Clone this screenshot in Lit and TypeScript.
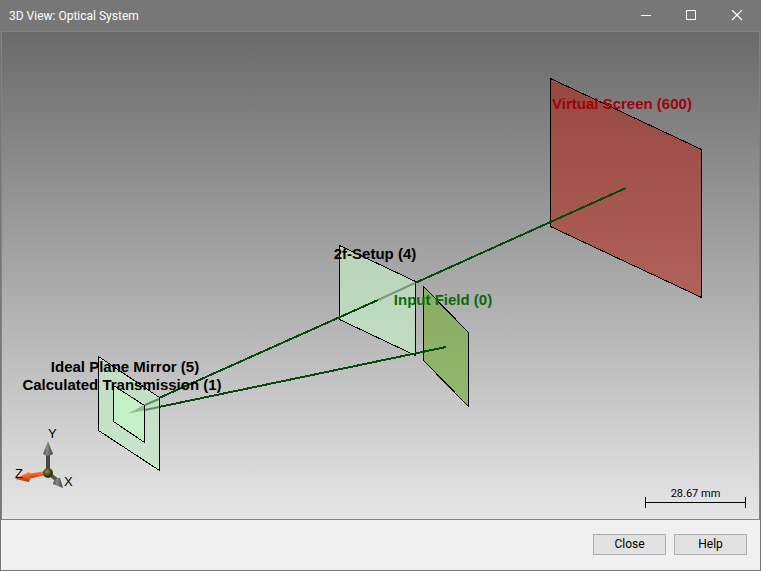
import { LitElement, html, css, svg } from "lit";
import { customElement, property } from "lit/decorators.js";

interface Label {
  text: string;
  x: number;
  y: number;
  kind: string;
}

const LABELS: Label[] = [
  { text: "Virtual Screen (600)", x: 622, y: 109, kind: "screen" },
  { text: "2f-Setup (4)", x: 375, y: 259, kind: "plain" },
  { text: "Input Field (0)", x: 443, y: 305, kind: "input" },
  { text: "Ideal Plane Mirror (5)", x: 125, y: 372, kind: "plain" },
  { text: "Calculated Transmission (1)", x: 122, y: 390, kind: "plain" },
];

/* Perspective drawing of the optical elements and the light path. */
@customElement("optical-scene")
export class OpticalScene extends LitElement {
  static styles = css`
    :host { display: block; min-width: 0; min-height: 0; }
    .scene { display: block; width: 100%; height: 100%; }
    .edge { stroke: #000; stroke-width: 1; shape-rendering: crispEdges; }
    .ray { stroke: #044a0c; stroke-width: 2; fill: none; shape-rendering: crispEdges; }
    .red { fill: #b22416; fill-opacity: 0.55; }
    .mint { fill: #c2eac6; fill-opacity: 0.7; }
    .core { fill: #c3f6c8; fill-opacity: 0.8; }
    .olive { fill: #78ac3c; fill-opacity: 0.66; }
    .label { font: bold 15px "Liberation Sans", Arial, sans-serif; text-anchor: middle; }
    .plain { fill: #000; }
    .screen { fill: #a00008; }
    .input { fill: #0a6a0a; }
  `;

  render() {
    return html`
      <svg class="scene" viewBox="2 32 757 487" role="img" aria-label="Optical system">
        <polygon class="edge red" points="550.5,78.5 701.5,149.5 701.5,297.5 550.5,226.5" />
        <polygon class="edge mint" points="339.5,245.5 415.5,281.5 415.5,355.5 339.5,319.5" />
        <polygon class="edge olive" points="423.5,286.5 468.5,332.5 468.5,406.5 423.5,360.5" />
        <path class="ray" d="M626 188L415 283M378 300L159 398M446 347L159 407" />
        <path d="M415 283L378 300" stroke="#759b78" stroke-width="2" />
        <polygon class="edge mint" points="98.5,356.5 159.5,397.5 159.5,470.5 98.5,430.5" />
        <polygon class="edge core" points="113.5,385.5 144.5,405.5 144.5,442.5 113.5,421.5" />
        <path d="M128 413.500L144 405L144 410.500Z" fill="#8fb894" />
        <path d="M145 405L159 399M145 410L159 407" stroke="#5e8c64" stroke-width="2" />
        ${LABELS.map((l) => svg`<text class="label ${l.kind}" x=${l.x} y=${l.y}>${l.text}</text>`)}
      </svg>
    `;
  }
}

/* Orientation triad shown in the corner of the view. */
@customElement("axis-triad")
export class AxisTriad extends LitElement {
  static styles = css`
    :host { display: block; }
    .triad { display: block; width: 68px; height: 72px; }
    .name { font: 13px "Liberation Sans", Arial, sans-serif; fill: #000; }
  `;

  render() {
    return html`
      <svg class="triad" viewBox="12 420 68 72" role="img" aria-label="Axes">
        <defs>
          <linearGradient id="steel">
            <stop offset="0" stop-color="#484848" />
            <stop offset="0.4" stop-color="#8a8a86" />
            <stop offset="1" stop-color="#3c3c3c" />
          </linearGradient>
          <linearGradient id="flame" x1="0" y1="0" x2="0" y2="1">
            <stop offset="0" stop-color="#ff7a38" />
            <stop offset="0.5" stop-color="#f05a1c" />
            <stop offset="1" stop-color="#a83208" />
          </linearGradient>
          <radialGradient id="ball" cx="0.4" cy="0.35">
            <stop offset="0" stop-color="#8c8c48" />
            <stop offset="1" stop-color="#34340c" />
          </radialGradient>
        </defs>
        <rect x="46" y="453" width="4" height="19" fill="#4a4a4a" />
        <path d="M48 441L53 454Q48 457 43 454Z" fill="url(#steel)" />
        <path d="M27 474L46 471L46 475L28 479Z" fill="url(#flame)" />
        <path d="M15 479L29 472Q32 476 29 482Z" fill="url(#flame)" />
        <path d="M48 473L57 480" stroke="#555" stroke-width="4" />
        <path d="M63 488L53 484Q54 477 60 478Z" fill="url(#steel)" />
        <circle cx="48" cy="473" r="5" fill="url(#ball)" />
        <text class="name" x="48" y="438">Y</text>
        <text class="name" x="15" y="478">Z</text>
        <text class="name" x="64" y="486">X</text>
      </svg>
    `;
  }
}

@customElement("app-root")
export class AppRoot extends LitElement {
  @property() caption = "3D View: Optical System";
  @property() scale = "28.67 mm";

  static styles = css`
    * { box-sizing: border-box; }
    :host { display: block; font: 12px Roboto, "Open Sans", sans-serif; color: #000; }
    .window {
      display: flex;
      flex-direction: column;
      height: 100vh;
      border: 1px solid #777;
      background: #f0f0f0;
    }
    .bar {
      display: flex;
      align-items: center;
      height: 30px;
      padding-left: 8px;
      background: #777;
      color: #fff;
    }
    .caption { flex: 1; margin: 0; font-size: 12px; font-weight: 400; }
    .control {
      display: grid;
      place-items: center;
      width: 46px;
      height: 30px;
      padding: 0;
      border: 0;
      background: transparent;
    }
    .glyph { width: 12px; height: 12px; fill: none; stroke: #fff; }
    .view {
      position: relative;
      flex: 1;
      min-height: 0;
      border: 1px solid #828282;
      background: linear-gradient(#6a6a6a, #a8a8a8 50%, #e6e6e6);
    }
    .drawing { height: 100%; }
    .axes { position: absolute; left: 10px; bottom: 27px; }
    .scale {
      position: absolute;
      right: 13px;
      bottom: 11px;
      width: 101px;
      text-align: center;
      font-size: 11px;
      line-height: 6px;
    }
    .rule {
      height: 11px;
      border: solid #000;
      border-width: 0 1px;
      background: linear-gradient(#000, #000) center / 100% 1px no-repeat;
    }
    .actions {
      display: flex;
      justify-content: flex-end;
      align-items: center;
      gap: 8px;
      height: 50px;
      padding: 0 13px 2px 0;
    }
    .push {
      width: 73px;
      height: 21px;
      padding: 0;
      border: 1px solid #adadad;
      background: #e1e1e1;
      font: inherit;
      color: #000;
    }
  `;

  render() {
    return html`
      <main class="window">
        <header class="bar">
          <h1 class="caption">${this.caption}</h1>
          <button class="control" aria-label="Minimize">
            <svg class="glyph" viewBox="0 0 12 12"><path d="M2 5.500H12" /></svg>
          </button>
          <button class="control" aria-label="Maximize">
            <svg class="glyph" viewBox="0 0 12 12"><path d="M1.500 0.500H10.500V9.500H1.500Z" /></svg>
          </button>
          <button class="control" aria-label="Close window">
            <svg class="glyph" viewBox="0 0 12 12"><path d="M1 0L11 10M11 0L1 10" stroke-width="1.2" /></svg>
          </button>
        </header>
        <section class="view">
          <optical-scene class="drawing"></optical-scene>
          <axis-triad class="axes"></axis-triad>
          <div class="scale">
            <div>${this.scale}</div>
            <div class="rule"></div>
          </div>
        </section>
        <footer class="actions">
          <button class="push">Close</button>
          <button class="push">Help</button>
        </footer>
      </main>
    `;
  }
}
